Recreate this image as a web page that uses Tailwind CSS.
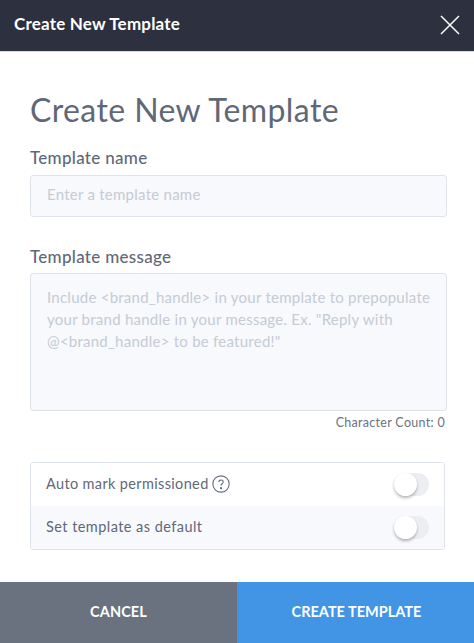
<!DOCTYPE html>
<html lang="en">
<head>
  <meta charset="UTF-8" />
  <title>Create New Template</title>
  <script src="https://cdn.jsdelivr.net/npm/@tailwindcss/browser@4"></script>
</head>
<body class="h-[643px] w-[474px] overflow-hidden bg-white flex flex-col font-['Lato',sans-serif]">

  <!-- Header -->
  <header class="h-[52px] shrink-0 bg-[#2d303e] border-b border-[#d5dbe3] flex items-center justify-between pl-[14px] pr-[13px]">
    <h2 class="text-[17px] font-bold text-white -mt-[3px] tracking-[0.2px]">Create New Template</h2>
    <svg class="w-[22px] h-[22px] -mt-[1px]" viewBox="0 0 22 22" fill="none" stroke="white" stroke-width="1.5"><path d="M2 2 L20 20 M20 2 L2 20" /></svg>
  </header>

  <main class="flex-1 px-[30px] pt-[39px]">
    <h1 class="text-[32px] leading-[38px] text-[#5f6878] tracking-[0.4px]">Create New Template</h1>

    <label class="block mt-[19px] text-[17px] leading-[20px] font-medium text-[#5f6878] tracking-[0.3px]">Template name</label>
    <div class="mt-[7px] h-[42px] w-[417px] rounded-[3px] border border-[#dfe3ea] bg-[#f7f9fc] px-[16px] pb-[3px] flex items-center text-[15px] text-[#c6cbd5] tracking-[0.25px]">Enter a template name</div>

    <label class="block mt-[30px] text-[17px] leading-[20px] font-medium text-[#5f6878] tracking-[0.3px]">Template message</label>
    <div class="mt-[6px] h-[138px] w-[417px] rounded-[3px] border border-[#dfe3ea] bg-[#f7f9fc] pl-[16px] pt-[12px] text-[15px] leading-[22px] text-[#c6cbd5] tracking-[0.25px] whitespace-nowrap">Include &lt;brand_handle&gt; in your template to prepopulate<br />your brand handle in your message. Ex. "Reply with<br />@&lt;brand_handle&gt; to be featured!"</div>
    <p class="mt-[4px] w-[415px] text-right text-[12.5px] leading-[16px] text-[#6b7280] tracking-[0.3px]">Character Count: 0</p>

    <!-- Toggles -->
    <div class="mt-[31px] w-[415px] rounded-[3px] border border-[#dfe3ea] overflow-hidden">
      <div class="h-[43px] px-[15px] flex items-center justify-between bg-white">
        <span class="flex items-center gap-[3px] text-[14.5px] text-[#5f6878] tracking-[0.35px] -mt-[2px]">
          Auto mark permissioned
          <svg class="w-[18px] h-[18px]" viewBox="0 0 17 17" fill="none" stroke="#5f6878" stroke-width="1"><circle cx="8.5" cy="8.5" r="7.7" /><path d="M6.4 6.7 C6.4 4 10.6 4 10.6 6.6 C10.6 8.3 8.5 8.2 8.5 10" /><circle cx="8.5" cy="12.4" r="0.5" fill="#5f6878" /></svg>
        </span>
        <span class="relative block w-[35px] h-[23px] rounded-full bg-[#eceef2]">
          <span class="absolute left-0 top-0 w-[23px] h-[23px] rounded-full bg-white shadow-[0_2px_3px_rgba(0,0,0,0.28)]"></span>
        </span>
      </div>
      <div class="h-[43px] px-[15px] flex items-center justify-between bg-[#f7f9fc]">
        <span class="text-[14.5px] text-[#5f6878] tracking-[0.45px] -mt-[1px]">Set template as default</span>
        <span class="relative block w-[35px] h-[23px] rounded-full bg-[#eceef2]">
          <span class="absolute left-0 top-0 w-[23px] h-[23px] rounded-full bg-white shadow-[0_2px_3px_rgba(0,0,0,0.28)]"></span>
        </span>
      </div>
    </div>
  </main>

  <!-- Footer buttons -->
  <footer class="h-[61px] shrink-0 flex text-[14.5px] font-bold text-white">
    <div class="w-[237px] bg-[#6a7280] flex items-center justify-center pb-[2px] tracking-[0.1px]">CANCEL</div>
    <div class="flex-1 bg-[#4295e4] flex items-center justify-center pb-[2px] pl-[2px] tracking-[0px]">CREATE TEMPLATE</div>
  </footer>
</body>
</html>
